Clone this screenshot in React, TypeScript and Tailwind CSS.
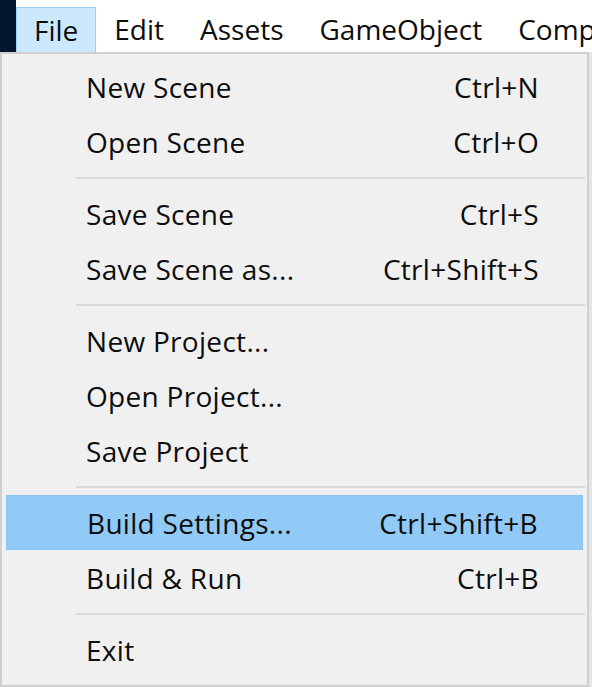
import React from "react";

type Item = { label: string; shortcut?: string; highlight?: boolean } | { sep: true };

const items: Item[] = [
  { label: "New Scene", shortcut: "Ctrl+N" },
  { label: "Open Scene", shortcut: "Ctrl+O" },
  { sep: true },
  { label: "Save Scene", shortcut: "Ctrl+S" },
  { label: "Save Scene as...", shortcut: "Ctrl+Shift+S" },
  { sep: true },
  { label: "New Project..." },
  { label: "Open Project..." },
  { label: "Save Project" },
  { sep: true },
  { label: "Build Settings...", shortcut: "Ctrl+Shift+B", highlight: true },
  { label: "Build & Run", shortcut: "Ctrl+B" },
  { sep: true },
  { label: "Exit" },
];

const menus = ["File", "Edit", "Assets", "GameObject", "Component"];

export default function App() {
  return (
    <div
      className="w-[592px] h-[687px] bg-white overflow-hidden text-[#0d0d0d] flex flex-col"
      style={{ fontFamily: '"Open Sans", "Noto Sans", sans-serif' }}
    >
      <div className="flex h-[52px] shrink-0 bg-white overflow-hidden">
        <div className="w-[16px] shrink-0 bg-[#03182e]" />
        <div className="flex items-stretch pt-[7px] shrink-0">
          {menus.map((m, i) => (
            <div
              key={m}
              className={
                i === 0
                  ? "shrink-0 px-[17px] flex items-center text-[28px] font-medium whitespace-nowrap bg-[#cce8ff] border border-[#99d1ff] border-b-0"
                  : "shrink-0 px-[18px] flex items-center text-[28px] font-medium whitespace-nowrap"
              }
            >
              <span className="-mt-[1px]">{m}</span>
            </div>
          ))}
        </div>
      </div>
      <div className="flex flex-1">
        <div className="w-[589px] shrink-0 bg-[#f0f0f0] border-2 border-[#d0d0d0] pt-[5px] flex flex-col">
          {items.map((it, i) =>
            "sep" in it ? (
              <div key={i} className="h-[17px] flex items-center pl-[74px] pr-[2px]">
                <div className="h-[2px] w-full bg-[#d9d9d9]" />
              </div>
            ) : (
              <div key={i} className="h-[55px] px-[4px] flex">
                <div
                  className={
                    "flex-1 flex items-center justify-between pl-[80px] pr-[44px] text-[28px] tracking-[0.3px] font-medium " +
                    (it.highlight ? "bg-[#91c9f7] border border-[#8cc4f2]" : "")
                  }
                >
                  <span>{it.label}</span>
                  {it.shortcut && <span>{it.shortcut}</span>}
                </div>
              </div>
            )
          )}
        </div>
        <div className="flex-1 bg-[#e6e6e6]" />
      </div>
    </div>
  );
}
